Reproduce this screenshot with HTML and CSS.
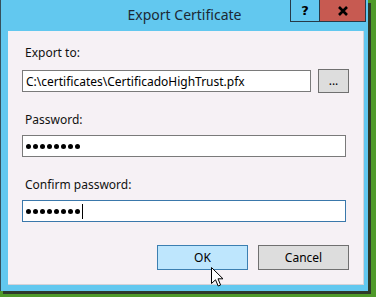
FILE: index.html
```html
<!DOCTYPE html>
<html lang="en">

<head>
  <meta charset="UTF-8" />
  <meta name="viewport" content="width=device-width, initial-scale=1.0" />
  <title>Export Certificate</title>
  <link rel="stylesheet" href="styles.css">
</head>

<body>
  <div class="window">
    <div class="titlebar">
      <div></div>
      <div class="title">Export Certificate</div>
      <div class="caption-btns">
        <div class="cap-btn help">?</div>
        <div class="cap-btn close">
          <svg width="12" height="10" viewBox="0 0 12 10">
            <path d="M2 1 L10 9 M10 1 L2 9" stroke="#000" stroke-width="2.6" fill="none" />
          </svg>
        </div>
      </div>
    </div>

    <div class="client">
      <div class="label first">Export to:</div>
      <div class="row">
        <div class="field path">C:\certificates\CertificadoHighTrust.pfx</div>
        <button class="btn browse">...</button>
      </div>

      <div class="label second">Password:</div>
      <div class="field wide">
        <span class="dots">
          <i></i><i></i><i></i><i></i><i></i><i></i><i></i><i></i>
        </span>
      </div>

      <div class="label third">Confirm password:</div>
      <div class="field wide focused">
        <span class="dots">
          <i></i><i></i><i></i><i></i><i></i><i></i><i></i><i></i>
        </span>
        <span class="caret"></span>
      </div>

      <div class="actions">
        <button class="btn ok">OK</button>
        <button class="btn">Cancel</button>
      </div>
    </div>

    <!-- mouse pointer over OK -->
    <svg class="pointer" width="13" height="20" viewBox="0 0 13 20">
      <path d="M0.5 0.5 L0.5 16.5 L4.5 12.8 L7.2 19 L9.6 18 L7 11.8 L12 11.8 Z" fill="#fff" stroke="#000" stroke-width="1" stroke-linejoin="miter" />
    </svg>
  </div>
</body>

</html>
```

FILE: styles.css
```css
* {
  box-sizing: border-box;
}

body {
  margin: 0;
  padding: 0;
  width: 376px;
  height: 297px;
  overflow: hidden;
  background-color: #4f9a2a;
  font-family: 'Noto Sans', sans-serif;
  font-size: 12px;
  color: #000;
}

.window {
  position: relative;
  width: 368px;
  height: 291px;
  background-color: #62c8ef;
  border-left: 1px solid #35505c;
  box-shadow: 3px 3px 0 #2d3a2a;
  display: flex;
  flex-direction: column;
}

.titlebar {
  height: 31px;
  display: grid;
  grid-template-columns: 1fr auto 1fr;
}

.title {
  font-size: 14px;
  line-height: 29px;
  color: #1c2834;
}

.caption-btns {
  display: flex;
  justify-content: flex-end;
  align-items: flex-start;
  padding-right: 2px;
}

.cap-btn {
  height: 22px;
  border: 1px solid #263a48;
  border-top: none;
  display: flex;
  align-items: center;
  justify-content: center;
  font-family: 'DejaVu Sans', sans-serif;
  font-weight: bold;
  font-size: 13px;
}

.help {
  width: 29px;
  border-right: none;
}

.close {
  width: 47px;
  background-color: #c75a51;
}

.client {
  flex: 1;
  margin: 0 4px 6px 7px;
  background-color: #f6f1f5;
  border-right: 1px solid #d4d2d8;
  border-bottom: 1px solid #d4d2d8;
  padding: 0 0 0 14px;
  display: flex;
  flex-direction: column;
  align-items: flex-start;
}

.label {
  padding-left: 3px;
  line-height: 16px;
  color: #111;
}

.label.first {
  margin-top: 14px;
  margin-bottom: 8px;
}

.label.second {
  margin-top: 19px;
  margin-bottom: 7px;
}

.label.third {
  margin-top: 20px;
  margin-bottom: 7px;
}

.row {
  display: flex;
  align-items: center;
  gap: 7px;
}

.field {
  height: 22px;
  background-color: #fff;
  border: 1px solid #7a7a7a;
  padding: 0 3px;
  display: flex;
  align-items: center;
  white-space: nowrap;
}

.path {
  width: 289px;
}

.wide {
  width: 324px;
}

.focused {
  border-color: #3a78ab;
}

.dots {
  display: flex;
  gap: 2px;
}

.dots i {
  width: 5px;
  height: 5px;
  border-radius: 50%;
  background-color: #000;
}

.caret {
  width: 1px;
  height: 15px;
  margin-left: 2px;
  background-color: #000;
}

.btn {
  height: 25px;
  width: 91px;
  padding: 0;
  background-color: #dddddd;
  border: 1px solid #707070;
  border-radius: 0;
  font-family: inherit;
  font-size: 12px;
  color: #000;
}

.browse {
  width: 31px;
  height: 24px;
  line-height: 14px;
}

.actions {
  align-self: flex-end;
  display: flex;
  gap: 10px;
  margin-top: 23px;
  margin-right: 14px;
}

.ok {
  width: 91px;
  background-color: #bee6fd;
  border-color: #3c7fb1;
}

.pointer {
  position: absolute;
  left: 210px;
  top: 267px;
}
```
